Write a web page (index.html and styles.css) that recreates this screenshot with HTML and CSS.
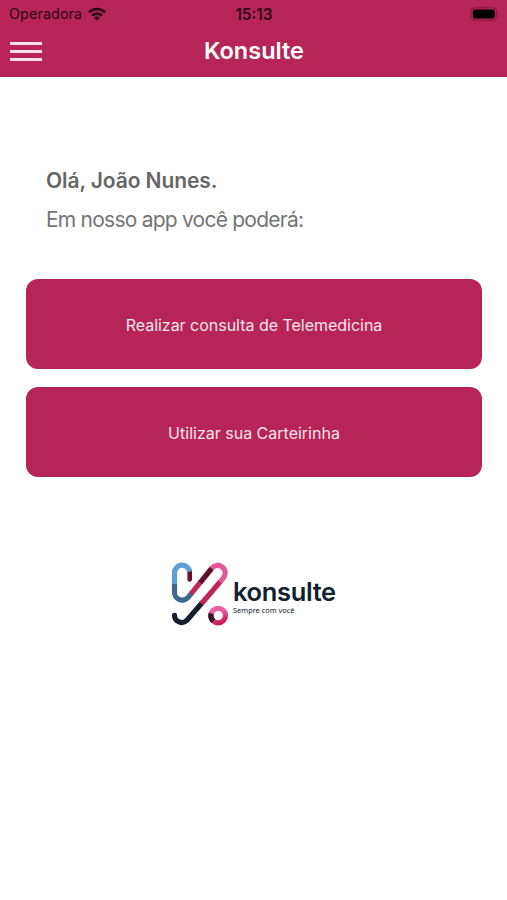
FILE: index.html
```html
<!DOCTYPE html>
<html lang="pt-BR">
<head>
    <meta charset="UTF-8">
    <meta name="viewport" content="width=device-width, initial-scale=1.0">
    <title>Konsulte</title>
    <link rel="stylesheet" href="styles.css">
</head>
<body>
    <!-- Header -->
    <header class="header">
        <div class="status-bar">
            <div class="carrier">
                <span>Operadora</span>
                <svg class="wifi" viewBox="0 0 18 14" fill="none" stroke="currentColor" stroke-width="2.6">
                    <path d="M1 5.2a11.6 11.6 0 0 1 16 0"/>
                    <path d="M4 8.6a7.2 7.2 0 0 1 10 0"/>
                    <path d="M9 13.6L6.2 10.9a4 4 0 0 1 5.6 0z" fill="currentColor" stroke="none"/>
                </svg>
            </div>
            <div class="time">15:13</div>
            <svg class="battery" viewBox="0 0 31 14">
                <rect x="1" y="0.8" width="25.5" height="12.4" rx="3.6" fill="none" stroke="#7c1840"/>
                <rect x="2.8" y="2.6" width="22" height="8.8" rx="2" fill="#000"/>
                <path d="M28 5.3q2 1.7 0 3.4z" fill="#7c1840"/>
            </svg>
        </div>
        <div class="nav-bar">
            <button class="menu-button" aria-label="Menu">
                <span></span>
                <span></span>
                <span></span>
            </button>
            <h1 class="title">Konsulte</h1>
        </div>
    </header>

    <main class="content">
        <!-- Greeting -->
        <div class="greeting">
            <p class="greeting-name">Olá, João Nunes.</p>
            <p class="greeting-text">Em nosso app você poderá:</p>
        </div>

        <!-- Actions -->
        <div class="actions">
            <button class="action telemedicine">Realizar consulta de Telemedicina</button>
            <button class="action card">Utilizar sua Carteirinha</button>
        </div>

        <!-- Logo -->
        <div class="logo">
            <svg class="logo-mark" viewBox="0 0 60 68" fill="none" stroke-width="5.2">
                <defs>
                    <linearGradient id="ring" x1="0" y1="0" x2="0.3" y2="1">
                        <stop offset="0.35" stop-color="#e8609f"/>
                        <stop offset="1" stop-color="#cf2160"/>
                    </linearGradient>
                </defs>
                <path d="M4.5 55.3A7.3 7.3 0 0 0 17 60.3L31.7 43.3" stroke="#14202c" stroke-linecap="round"/>
                <path d="M19.7 11V19.5" stroke="#64132f" stroke-width="4.6" stroke-linecap="round"/>
                <path d="M4.5 24.3V13.2A7.6 7.6 0 0 1 19.6 11.6" stroke="#5b9fd4"/>
                <path d="M4.5 24V31A7.9 7.9 0 0 0 18.4 37.2L21.7 33" stroke="#3f6790"/>
                <path d="M21.2 33.6L30.5 22.2" stroke="#c22759"/>
                <path d="M30.2 22.6L42 8" stroke="#5d102d"/>
                <path d="M41.6 8.5A7.5 7.5 0 0 1 53.8 17.4L49.7 22.4" stroke="#e35698"/>
                <path d="M50 22L31.4 43.7" stroke="#bd2756"/>
                <circle cx="48.2" cy="55.6" r="7.3" stroke="url(#ring)"/>
                <path d="M43.4 61.1A7.3 7.3 0 0 1 41.2 53.4" stroke="#33152b"/>
            </svg>
            <div class="logo-text">
                <div class="logo-name">konsulte</div>
                <div class="logo-slogan">Sempre com você</div>
            </div>
        </div>
    </main>
</body>
</html>
```
FILE: styles.css
```css
body {
    font-family: Inter, "Liberation Sans", sans-serif;
    background-color: #fff;
    margin: 0;
    padding: 0;
}

.header {
    height: 77px;
    background-color: #b72457;
}

.status-bar {
    display: grid;
    grid-template-columns: 1fr auto 1fr;
    align-items: center;
    height: 27px;
    padding: 0 8px 0 9px;
    color: #2b0716;
    font-size: 14.5px;
}

.carrier {
    display: flex;
    align-items: center;
    gap: 6px;
}

.wifi {
    width: 18px;
    height: 14px;
}

.time {
    font-weight: 600;
    font-size: 15.3px;
    line-height: 18px;
    padding-top: 2px;
}

.battery {
    width: 31px;
    height: 14px;
    justify-self: end;
    margin-right: -2px;
}

.nav-bar {
    display: grid;
    grid-template-columns: 1fr auto 1fr;
    align-items: center;
    height: 48px;
    padding: 0 9px 0 10px;
}

.menu-button {
    display: flex;
    flex-direction: column;
    gap: 5px;
    width: 32px;
    padding: 0;
    border: none;
    background: none;
    cursor: pointer;
}

.menu-button span {
    height: 3px;
    background-color: #fbdfeb;
}

.title {
    margin: 0;
    color: #fff;
    font-size: 23.5px;
    font-weight: 600;
    line-height: 28px;
}

.content {
    padding: 88px 25px 0 26px;
}

.greeting {
    padding-left: 20px;
    color: #666;
    font-size: 21px;
    line-height: 32px;
}

.greeting p {
    margin: 0 0 7px;
}

.greeting-name {
    font-weight: 600;
    letter-spacing: -0.1px;
}

.greeting-text {
    color: #757575;
    letter-spacing: -0.77px;
}

.actions {
    display: flex;
    flex-direction: column;
    gap: 18px;
    margin-top: 43px;
}

.action {
    height: 90px;
    padding: 2px 6px 0;
    border: none;
    border-radius: 12px;
    background-color: #b72457;
    color: #fde4ee;
    font-family: inherit;
    font-size: 16px;
    cursor: pointer;
}

.action.telemedicine {
    letter-spacing: -0.02px;
}

.logo {
    display: flex;
    align-items: flex-start;
    gap: 3px;
    margin: 83px 0 0 144px;
}

.logo-mark {
    width: 60px;
    height: 68px;
}

.logo-text {
    padding-top: 18px;
    color: #14202c;
}

.logo-name {
    font-size: 25.5px;
    font-weight: 600;
    letter-spacing: -0.35px;
    line-height: 28px;
}

.logo-slogan {
    font-family: "Noto Sans", sans-serif;
    font-size: 7.4px;
    line-height: 8px;
}
```
